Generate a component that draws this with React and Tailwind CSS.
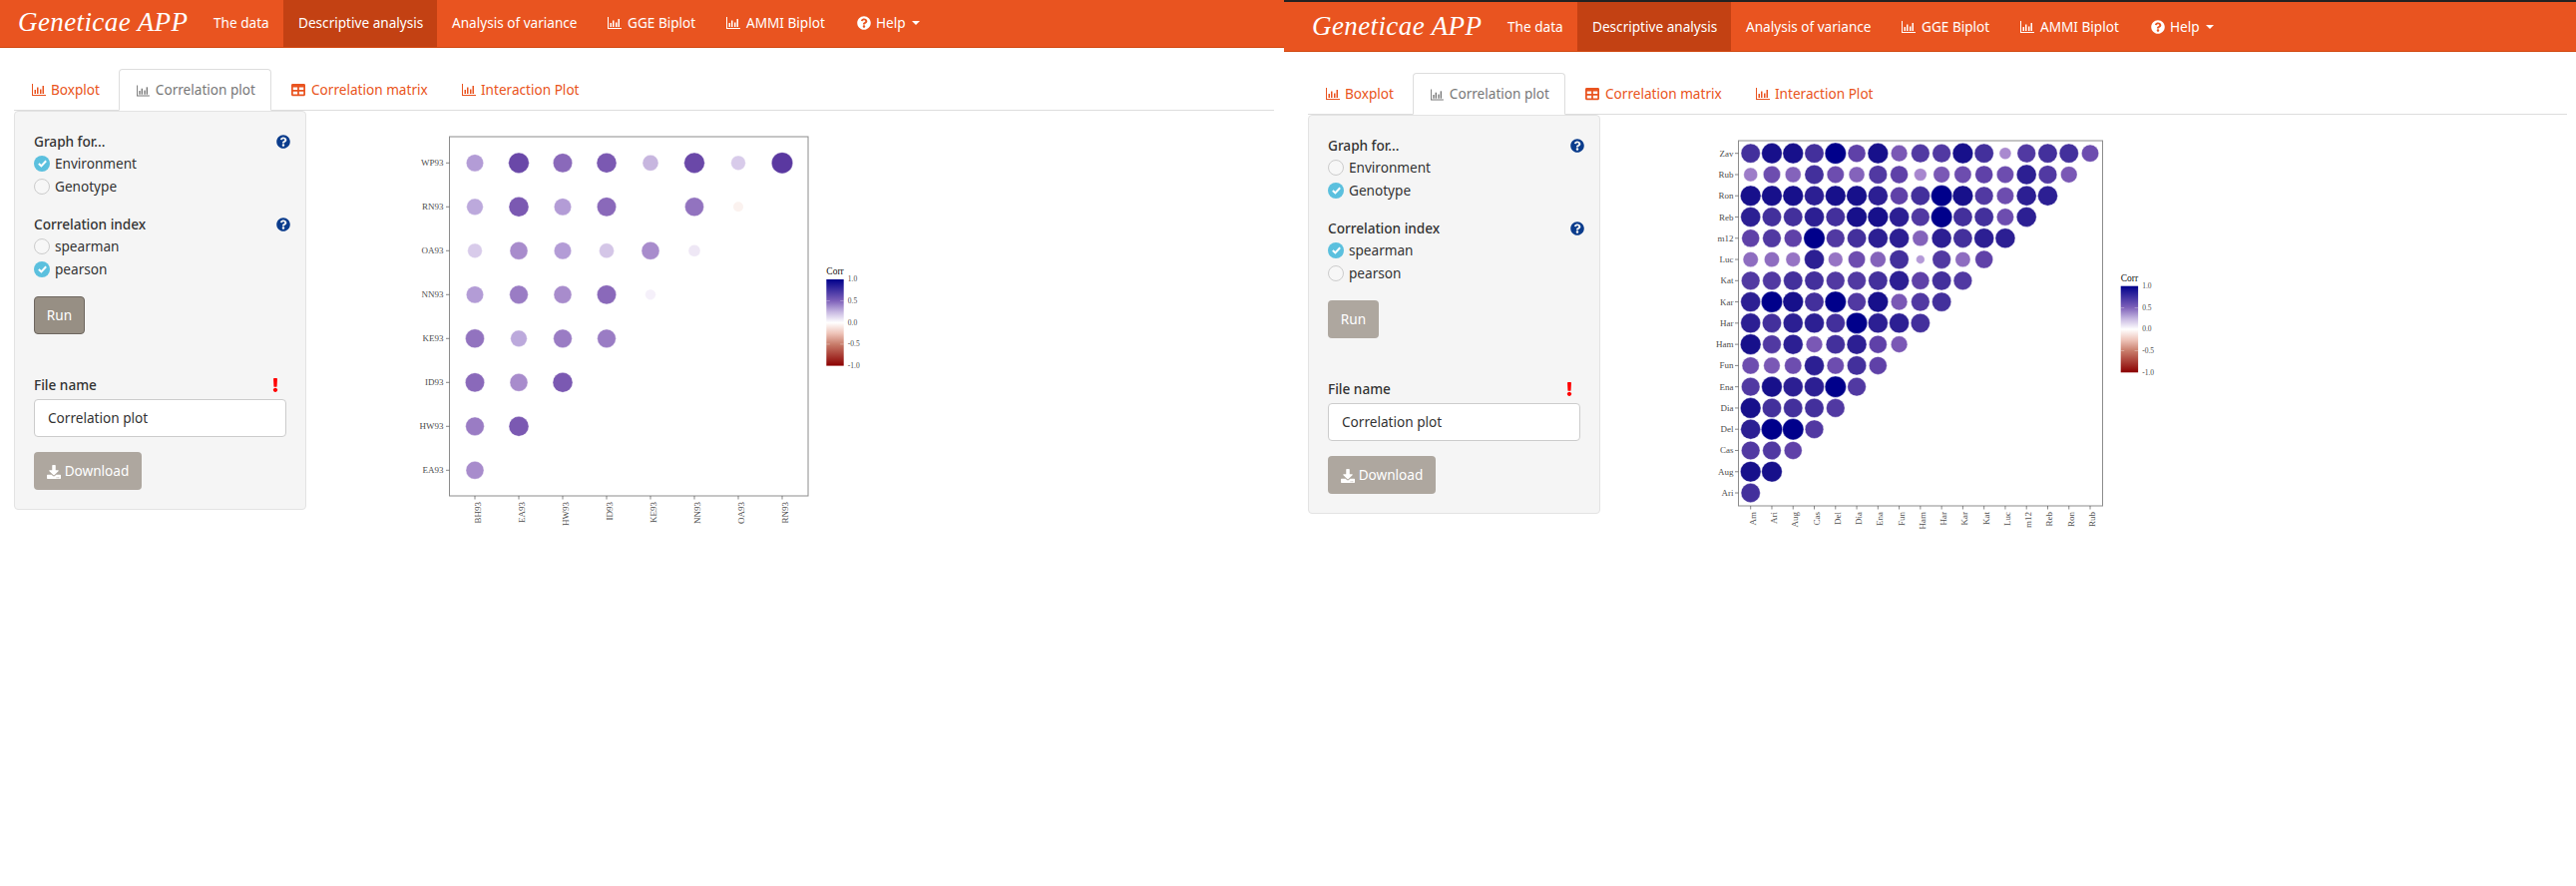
import React from 'react';
import { FaQuestionCircle, FaDownload, FaExclamation, FaTable } from 'react-icons/fa';

const uiFont = "font-['Noto_Sans',sans-serif]";

function BarIcon({ className = '' }) {
  return (
    <svg viewBox="0 0 14 12" className={`w-[14px] h-[12px] ${className}`} fill="currentColor">
      <path d="M0 0h1v11h13v1H0z" />
      <rect x="2.5" y="6" width="1.5" height="4" />
      <rect x="5" y="3.5" width="1.5" height="6.5" />
      <rect x="8" y="5.5" width="1.5" height="4.5" />
      <rect x="10.5" y="2" width="1.5" height="8" />
    </svg>
  );
}

function Navbar({ className }) {
  return (
    <nav className={`flex h-[50px] shrink-0 bg-[#e95420] border-b border-[#d0470f] text-white text-[13.6px] ${className}`}>
      <div className="w-[199px] pl-[18px] flex items-center font-['Liberation_Serif',serif] italic text-[27px] tracking-[0.4px] whitespace-nowrap">
        Geneticae APP
      </div>
      <a className="flex items-center px-[15px] pt-[1px] w-[85px] whitespace-nowrap">The data</a>
      <a className="flex items-center px-[15px] pt-[1px] bg-[#c34113] w-[154px] whitespace-nowrap">Descriptive analysis</a>
      <a className="flex items-center px-[15px] pt-[1px] w-[156px] whitespace-nowrap">Analysis of variance</a>
      <a className="flex items-center gap-[6px] px-[15px] pt-[1px] w-[119px] whitespace-nowrap"><BarIcon />GGE Biplot</a>
      <a className="flex items-center gap-[6px] px-[15px] pt-[1px] w-[131px] whitespace-nowrap"><BarIcon />AMMI Biplot</a>
      <a className="flex items-center px-[15px] pt-[1px] whitespace-nowrap">
        <FaQuestionCircle className="text-[14px] mr-[5px]" />Help
        <span className="ml-[6px] w-0 h-0 border-x-[4px] border-x-transparent border-t-[4px] border-t-white" />
      </a>
    </nav>
  );
}

function Tabs() {
  return (
    <div className="flex h-[42px] mt-[21px] border-b border-[#ddd] text-[13.6px] text-[#e95420]">
      <div className="flex items-center gap-[5px] pl-[18px] pr-[15px] pt-[1px] w-[103px] mr-[2px] whitespace-nowrap"><BarIcon />Boxplot</div>
      <div className="flex items-center gap-[6px] pl-[17px] pr-[15px] pt-[1px] w-[153px] mr-[2px] h-[42px] bg-white border border-[#ddd] border-b-white rounded-t text-[#777] whitespace-nowrap"><BarIcon />Correlation plot</div>
      <div className="flex items-center gap-[6px] pl-[18px] pr-[15px] pt-[1px] w-[170px] mr-[2px] whitespace-nowrap"><FaTable className="text-[14px]" />Correlation matrix</div>
      <div className="flex items-center gap-[5px] pl-[17px] pr-[15px] pt-[1px] whitespace-nowrap"><BarIcon />Interaction Plot</div>
    </div>
  );
}

function Radio({ label, checked }) {
  return (
    <div className="flex items-center h-[23px] text-[13.6px] text-[#333]">
      {checked ? (
        <span className="w-[16px] h-[16px] rounded-full bg-[#5bc0de] flex items-center justify-center">
          <svg viewBox="0 0 12 12" className="w-[11px] h-[11px]" fill="none" stroke="white" strokeWidth="2.2">
            <path d="M2 6.5l2.8 2.6L10 3.5" />
          </svg>
        </span>
      ) : (
        <span className="w-[16px] h-[16px] rounded-full bg-[#f7f7f7] border border-[#ccc]" />
      )}
      <span className="ml-[5px] pt-[1px]">{label}</span>
    </div>
  );
}

function LabelRow({ text, icon, className = '' }) {
  return (
    <div className={`flex items-center justify-between h-[20px] text-[13.6px] font-medium text-[#333] ${className}`}>
      <span className="pt-[1px]">{text}</span>
      {icon}
    </div>
  );
}

function Sidebar({ envChecked, pearsonChecked, runPressed }) {
  const help = <FaQuestionCircle className="text-[14px] text-[#0b3c8c]" />;
  return (
    <div className="w-[293px] h-[400px] shrink-0 bg-[#f5f5f5] border border-[#e3e3e3] rounded pt-[20px] px-[19px]">
      <LabelRow text="Graph for..." icon={help} className="w-[257px]" />
      <Radio label="Environment" checked={envChecked} />
      <Radio label="Genotype" checked={!envChecked} />
      <LabelRow text="Correlation index" icon={help} className="mt-[17px] w-[257px]" />
      <Radio label="spearman" checked={!pearsonChecked} />
      <Radio label="pearson" checked={pearsonChecked} />
      <button className={`mt-[16px] block w-[51px] h-[38px] pt-[1px] rounded text-[13.6px] text-white ${runPressed ? 'bg-[#978f84] border border-[#6d665f]' : 'bg-[#aea79f]'}`}>
        Run
      </button>
      <LabelRow
        text="File name"
        icon={<FaExclamation className="text-[14px] text-[#f00] mr-[4px]" />}
        className="mt-[41px] w-[253px]"
      />
      <div className="mt-[4px] w-[253px] h-[38px] flex items-center px-[13px] pt-[1px] bg-white border border-[#ccc] rounded text-[13.6px] text-[#333]">
        Correlation plot
      </div>
      <button className="mt-[15px] flex items-center justify-center gap-[4px] w-[108px] h-[38px] pt-[1px] rounded bg-[#aea79f] text-[13.6px] text-white">
        <FaDownload className="text-[14px]" />Download
      </button>
    </div>
  );
}

const hex = (c) => [1, 3, 5].map((i) => parseInt(c.slice(i, i + 2), 16));

// diameter (in 3x pixels) to fill, read off the picture
function fillFor(stops, d) {
  if (d <= stops[0][0]) return stops[0][1];
  for (let i = 1; i < stops.length; i++) {
    if (d <= stops[i][0]) {
      const [d0, c0] = stops[i - 1];
      const [d1, c1] = stops[i];
      const t = (d - d0) / (d1 - d0);
      const a = hex(c0);
      const b = hex(c1);
      return `rgb(${a.map((v, k) => Math.round(v + (b[k] - v) * t)).join(',')})`;
    }
  }
  return stops[stops.length - 1][1];
}

const leftStops = [
  [30, '#f8f5fc'], [36, '#eee7f5'], [44, '#d8cbea'], [48, '#c7b6df'], [50, '#bca9dc'], [52, '#b39cd6'],
  [54, '#a88ccc'], [56, '#9a7cc4'], [58, '#8a69ba'], [60, '#7b59b2'], [62, '#6a48a8'], [64, '#5a38a0'],
];

const rightStops = [
  [26, '#b49ad8'], [40, '#a583cc'], [46, '#8e6dc0'], [50, '#7a58b5'], [54, '#5f41a8'],
  [58, '#43309c'], [60, '#2c1f93'], [62, '#17108b'], [64, '#00008b'],
];

const leftPlot = {
  panel: [50.5, 17, 359.5, 360],
  x0: 76, y0: 43.3, step: 44, font: 9, labelDx: 6, labelGap: 6,
  rows: ['WP93', 'RN93', 'OA93', 'NN93', 'KE93', 'ID93', 'HW93', 'EA93'],
  cols: ['BH93', 'EA93', 'HW93', 'ID93', 'KE93', 'NN93', 'OA93', 'RN93'],
  stops: leftStops,
  sizes: [
    [52, 62, 58, 60, 48, 62, 44, 64],
    [50, 60, 52, 58, 0, 57, 0],
    [44, 54, 52, 45, 54, 36],
    [52, 56, 54, 58, 32],
    [57, 50, 56, 56],
    [58, 54, 60],
    [56, 60],
    [54],
  ],
  legend: [428.3, 160],
};

const rightPlot = {
  panel: [42.5, 11, 365, 366],
  x0: 54.7, y0: 23.7, step: 21.27, font: 9, labelDx: 5, labelGap: 5,
  rows: ['Zav', 'Rub', 'Ron', 'Reb', 'm12', 'Luc', 'Kat', 'Kar', 'Har', 'Ham', 'Fun', 'Ena', 'Dia', 'Del', 'Cas', 'Aug', 'Ari'],
  cols: ['Am', 'Ari', 'Aug', 'Cas', 'Del', 'Dia', 'Ena', 'Fun', 'Ham', 'Har', 'Kar', 'Kat', 'Luc', 'm12', 'Reb', 'Ron', 'Rub'],
  stops: rightStops,
  sizes: [
    [58, 62, 62, 58, 64, 54, 62, 50, 56, 56, 62, 58, 36, 56, 58, 58, 52],
    [42, 52, 48, 58, 52, 48, 56, 54, 38, 50, 52, 54, 52, 60, 56, 50],
    [62, 62, 62, 60, 62, 62, 60, 54, 58, 64, 62, 56, 52, 60, 60],
    [60, 58, 58, 60, 58, 62, 62, 60, 56, 64, 58, 58, 52, 60],
    [54, 56, 54, 64, 56, 58, 60, 60, 48, 60, 58, 60, 60],
    [46, 46, 44, 60, 44, 52, 48, 58, 26, 56, 46, 54],
    [56, 56, 58, 58, 56, 56, 58, 60, 54, 58, 56],
    [60, 64, 62, 58, 64, 56, 62, 50, 56, 58],
    [60, 58, 60, 60, 58, 64, 60, 60, 58],
    [62, 56, 60, 50, 58, 60, 54, 50],
    [52, 50, 52, 60, 52, 58, 54],
    [56, 62, 60, 60, 64, 56],
    [62, 58, 58, 58, 56],
    [60, 64, 64, 56],
    [56, 56, 54],
    [62, 62],
    [58],
  ],
  legend: [425.7, 156.7],
};

function CorrPlot({ plot, id, width, height, extra }) {
  const { panel, x0, y0, step, font, rows, cols, sizes, stops, legend, labelDx, labelGap } = plot;
  const [px, py, pw, ph] = panel;
  const [lx, ly] = legend;
  const bottom = py + ph;
  return (
    <svg width={width} height={height} viewBox={`0 0 ${width} ${height}`} className="shrink-0 font-['Liberation_Serif',serif]">
      <defs>
        <linearGradient id={id} x1="0" y1="0" x2="0" y2="1">
          <stop offset="0" stopColor="#00008b" />
          <stop offset="0.25" stopColor="#7f62ba" />
          <stop offset="0.38" stopColor="#c8b9e2" />
          <stop offset="0.5" stopColor="#ffffff" />
          <stop offset="0.62" stopColor="#efc6bb" />
          <stop offset="0.75" stopColor="#c87d6b" />
          <stop offset="1" stopColor="#8b0000" />
        </linearGradient>
      </defs>
      <rect x={px} y={py} width={pw} height={ph} fill="white" stroke="#8c8c8c" strokeWidth="1" />
      {sizes.map((row, r) =>
        row.map((d, c) =>
          d > 0 ? (
            <circle key={`${r}-${c}`} cx={x0 + c * step} cy={y0 + r * step} r={d / 6} fill={fillFor(stops, d)} stroke="white" strokeWidth="0.4" />
          ) : null
        )
      )}
      {extra}
      {rows.map((name, r) => (
        <g key={name}>
          <line x1={px - 3.5} x2={px} y1={y0 + r * step} y2={y0 + r * step} stroke="#555" strokeWidth="0.7" />
          <text x={px - labelGap} y={y0 + r * step + 3} textAnchor="end" fontSize={font} fill="#4d4d4d">{name}</text>
        </g>
      ))}
      {cols.map((name, c) => {
        const x = x0 + c * step;
        return (
          <g key={name + c}>
            <line x1={x} x2={x} y1={bottom} y2={bottom + 3.5} stroke="#555" strokeWidth="0.7" />
            <text transform={`translate(${x + labelDx} ${bottom + 6}) rotate(-90)`} textAnchor="end" fontSize={font} fill="#4d4d4d">{name}</text>
          </g>
        );
      })}
      <text x={lx} y={ly - 5} fontSize="9.5" fill="#111">Corr</text>
      <rect x={lx} y={ly} width="17.4" height="86.6" fill={`url(#${id})`} />
      {[0.25, 0.5, 0.75].map((f) => (
        <g key={f} stroke="white" strokeWidth="0.5" opacity="0.7">
          <line x1={lx} x2={lx + 3.5} y1={ly + 86.6 * f} y2={ly + 86.6 * f} />
          <line x1={lx + 13.9} x2={lx + 17.4} y1={ly + 86.6 * f} y2={ly + 86.6 * f} />
        </g>
      ))}
      {['1.0', '0.5', '0.0', '-0.5', '-1.0'].map((t, i) => (
        <text key={t} x={lx + 21.5} y={ly + 2.4 + i * 21.65} fontSize="7.5" fill="#4d4d4d">{t}</text>
      ))}
    </svg>
  );
}

export default function App() {
  return (
    <div className={`flex w-[2582px] h-[888px] overflow-hidden bg-white ${uiFont}`}>
      {/* left window, scrolled up a little */}
      <div className="w-[1287px] shrink-0 -mt-[2px]">
        <Navbar className="" />
        <div className="pl-[14px] pr-[10px]">
          <Tabs />
          <div className="flex">
            <Sidebar envChecked pearsonChecked runPressed />
            <div className="ml-[93px] mt-[9px]">
              <CorrPlot
                plot={leftPlot}
                id="legendLeft"
                width={490}
                height={420}
                extra={<circle cx={340} cy={87.3} r={5} fill="#fbf2ef" />}
              />
            </div>
          </div>
        </div>
      </div>

      {/* right window */}
      <div className="flex-1 min-w-0">
        <div className="h-[2px] bg-[#222]" />
        <Navbar className="pl-[10px]" />
        <div className="pl-[24px] pr-[9px]">
          <Tabs />
          <div className="flex">
            <Sidebar runPressed={false} />
            <div className="ml-[96px] mt-[15px]">
              <CorrPlot plot={rightPlot} id="legendRight" width={500} height={400} />
            </div>
          </div>
        </div>
      </div>
    </div>
  );
}
